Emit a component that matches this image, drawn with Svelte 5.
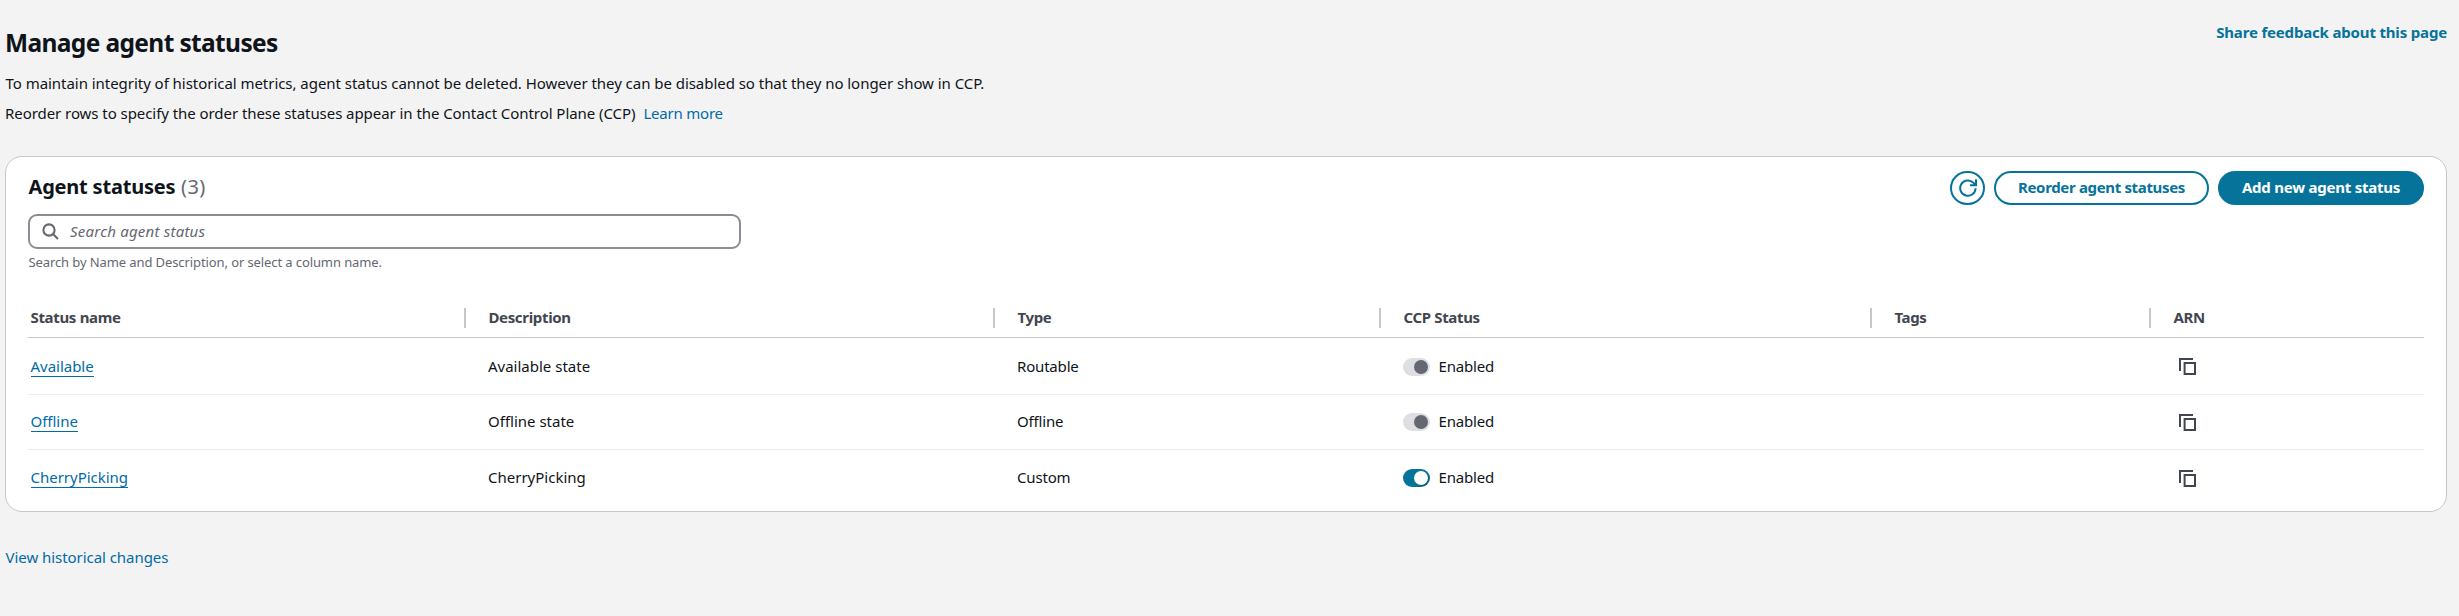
<script>
  const columns = [
    { label: 'Status name', width: 438 },
    { label: 'Description', width: 529 },
    { label: 'Type', width: 386 },
    { label: 'CCP Status', width: 491 },
    { label: 'Tags', width: 279 },
    { label: 'ARN', width: 273 }
  ];
  const statuses = [
    { name: 'Available', description: 'Available state', type: 'Routable', locked: true },
    { name: 'Offline', description: 'Offline state', type: 'Offline', locked: true },
    { name: 'CherryPicking', description: 'CherryPicking', type: 'Custom', locked: false }
  ];
</script>

<main>
  <header>
    <div class="intro">
      <h1>Manage agent statuses</h1>
      <p class="first">To maintain integrity of historical metrics, agent status cannot be deleted. However they can be disabled so that they no longer show in CCP.</p>
      <p class="second"><span>Reorder rows to specify the order these statuses appear in the Contact Control Plane (CCP)</span><a class="learn" href="#learn">Learn more</a></p>
    </div>
    <a class="feedback" href="#feedback">Share feedback about this page</a>
  </header>

  <section class="card">
    <div class="bar">
      <h2>Agent statuses <span>(3)</span></h2>
      <div class="actions">
        <button class="round" aria-label="Refresh">
          <svg width="18" height="18" viewBox="0 0 18 18" fill="none" stroke="currentColor" stroke-width="2">
            <path d="M16.6 9.2a7.7 7.7 0 1 1-2.3-5.6L16 5.6" />
            <path d="M17 .3v6h-6" />
          </svg>
        </button>
        <button class="outline">Reorder agent statuses</button>
        <button class="primary">Add new agent status</button>
      </div>
    </div>

    <div class="search">
      <svg width="17" height="17" viewBox="0 0 17 17" fill="none" stroke="currentColor" stroke-width="2.1">
        <circle cx="7" cy="7" r="5.6" />
        <path d="M11 11l4.9 4.9" />
      </svg>
      <input type="text" placeholder="Search agent status" />
    </div>
    <div class="hint">Search by Name and Description, or select a column name.</div>

    <table>
      <colgroup>
        {#each columns as column}
          <col style:width="{column.width}px" />
        {/each}
      </colgroup>
      <thead>
        <tr>
          {#each columns as column}
            <th><div>{column.label}</div></th>
          {/each}
        </tr>
      </thead>
      <tbody>
        {#each statuses as status}
          <tr>
            <td class="name"><a href="#status">{status.name}</a></td>
            <td><div class="text">{status.description}</div></td>
            <td class="tight"><div class="text">{status.type}</div></td>
            <td class="tight">
              <div class="toggle">
                <span class="track" class:locked={status.locked}><span class="knob"></span></span>
                <span class="text">Enabled</span>
              </div>
            </td>
            <td></td>
            <td>
              <svg class="copy" width="17" height="17" viewBox="0 0 17 17" fill="none" stroke="currentColor" stroke-width="2">
                <path d="M1 13V1h13" />
                <rect x="5.6" y="5" width="10.4" height="11" />
              </svg>
            </td>
          </tr>
        {/each}
      </tbody>
    </table>
  </section>

  <a class="history" href="#history">View historical changes</a>
</main>

<style>
  :global(body) {
    background: #f3f3f3;
  }
  main {
    box-sizing: border-box;
    min-height: 616px;
    padding: 0 12px 0 5px;
    font: 400 15px/30px "Noto Sans", "Open Sans", sans-serif;
    color: #0f141a;
  }
  a {
    color: #006ba6;
    text-decoration: none;
  }
  header {
    display: flex;
    justify-content: space-between;
    align-items: flex-start;
    height: 156px;
  }
  h1 {
    margin: 24px 0 7px;
    font-size: 24.5px;
    line-height: 37px;
    font-weight: 700;
    letter-spacing: -0.63px;
  }
  p {
    margin: 0;
    white-space: nowrap;
  }
  .first {
    padding-left: 0.5px;
    letter-spacing: -0.04px;
  }
  .second {
    letter-spacing: -0.06px;
  }
  .learn {
    margin-left: 8px;
    letter-spacing: -0.22px;
  }
  .feedback {
    margin-top: 17px;
    color: #06739b;
    font-weight: 700;
    letter-spacing: -0.17px;
  }
  .card {
    box-sizing: border-box;
    height: 356px;
    padding: 14px 22px 0;
    border: 1px solid #c6c6cd;
    border-radius: 17px;
    background: #fff;
  }
  .bar {
    display: flex;
    justify-content: space-between;
    height: 34px;
  }
  h2 {
    margin: 0 0 0 0.5px;
    font-size: 20px;
    line-height: 32px;
    font-weight: 700;
    letter-spacing: -0.2px;
  }
  h2 span {
    margin-left: 0.5px;
    color: #656871;
    font-weight: 400;
    letter-spacing: 0.5px;
  }
  .actions {
    display: flex;
  }
  button {
    box-sizing: border-box;
    height: 34px;
    padding: 0 0 2px;
    border: 2px solid #06739b;
    border-radius: 17px;
    background: #fff;
    color: #06739b;
    font: 700 15px/28px "Noto Sans", "Open Sans", sans-serif;
  }
  .round {
    display: flex;
    align-items: center;
    justify-content: center;
    width: 35px;
    margin-right: 9px;
    padding: 0;
  }
  .outline {
    width: 215px;
    margin-right: 9px;
    letter-spacing: -0.34px;
  }
  .primary {
    width: 206px;
    background: #06739b;
    color: #fff;
    letter-spacing: -0.23px;
  }
  .search {
    display: flex;
    align-items: center;
    box-sizing: border-box;
    width: 713px;
    height: 35px;
    margin-top: 9px;
    padding-left: 12px;
    border: 2px solid #8c8c94;
    border-radius: 9px;
    color: #656871;
  }
  input {
    flex: 1;
    margin-left: 11px;
    padding: 0;
    border: 0;
    outline: 0;
    background: none;
    font: 400 15px/21px "Noto Sans", "Open Sans", sans-serif;
    letter-spacing: 0.22px;
  }
  input::placeholder {
    color: #656871;
    opacity: 1;
    font-style: italic;
  }
  .hint {
    height: 49px;
    padding-left: 0.5px;
    font-size: 13px;
    line-height: 27px;
    letter-spacing: -0.1px;
    color: #656871;
  }
  table {
    width: 2396px;
    table-layout: fixed;
    border-collapse: separate;
    border-spacing: 0;
  }
  th {
    height: 39px;
    padding: 0;
    border-bottom: 1px solid #c6c6cd;
    color: #424650;
    font-weight: 700;
    text-align: left;
    letter-spacing: -0.33px;
  }
  th div {
    height: 20px;
    padding-left: 22.4px;
    border-right: 2px solid #c6c6cd;
    line-height: 18px;
  }
  th:first-child div,
  td:first-child {
    padding-left: 2.5px;
  }
  th:last-child div {
    border-right: 0;
  }
  td {
    height: 54px;
    padding: 0 0 0 22px;
    border-bottom: 1px solid #ebebf0;
    line-height: 22px;
    letter-spacing: 0;
  }
  tbody tr:first-child td {
    height: 55px;
    padding-top: 1px;
  }
  tbody tr:last-child td {
    height: 56px;
    border-bottom: 0;
  }
  .text {
    padding-bottom: 2px;
  }
  td.name {
    letter-spacing: -0.02px;
  }
  .name a {
    display: inline-block;
    margin-bottom: 2px;
    line-height: 20px;
    border-bottom: 1px solid #006ba6;
  }
  .tight {
    letter-spacing: -0.18px;
  }
  .toggle {
    display: flex;
    align-items: center;
    gap: 8.5px;
  }
  .track {
    display: flex;
    justify-content: flex-end;
    box-sizing: border-box;
    width: 27px;
    height: 18px;
    padding: 2px;
    border-radius: 9px;
    background: #06739b;
  }
  .knob {
    width: 14px;
    height: 14px;
    border-radius: 50%;
    background: #fff;
    box-shadow: 1px 1px 1px #00000040;
  }
  .locked {
    background: #dedee3;
  }
  .locked .knob {
    background: #656871;
    box-shadow: none;
  }
  .copy {
    display: block;
    margin-left: 6px;
    color: #424650;
  }
  .history {
    display: inline-block;
    margin: 30px 0 0 0.5px;
    letter-spacing: -0.05px;
  }
</style>
